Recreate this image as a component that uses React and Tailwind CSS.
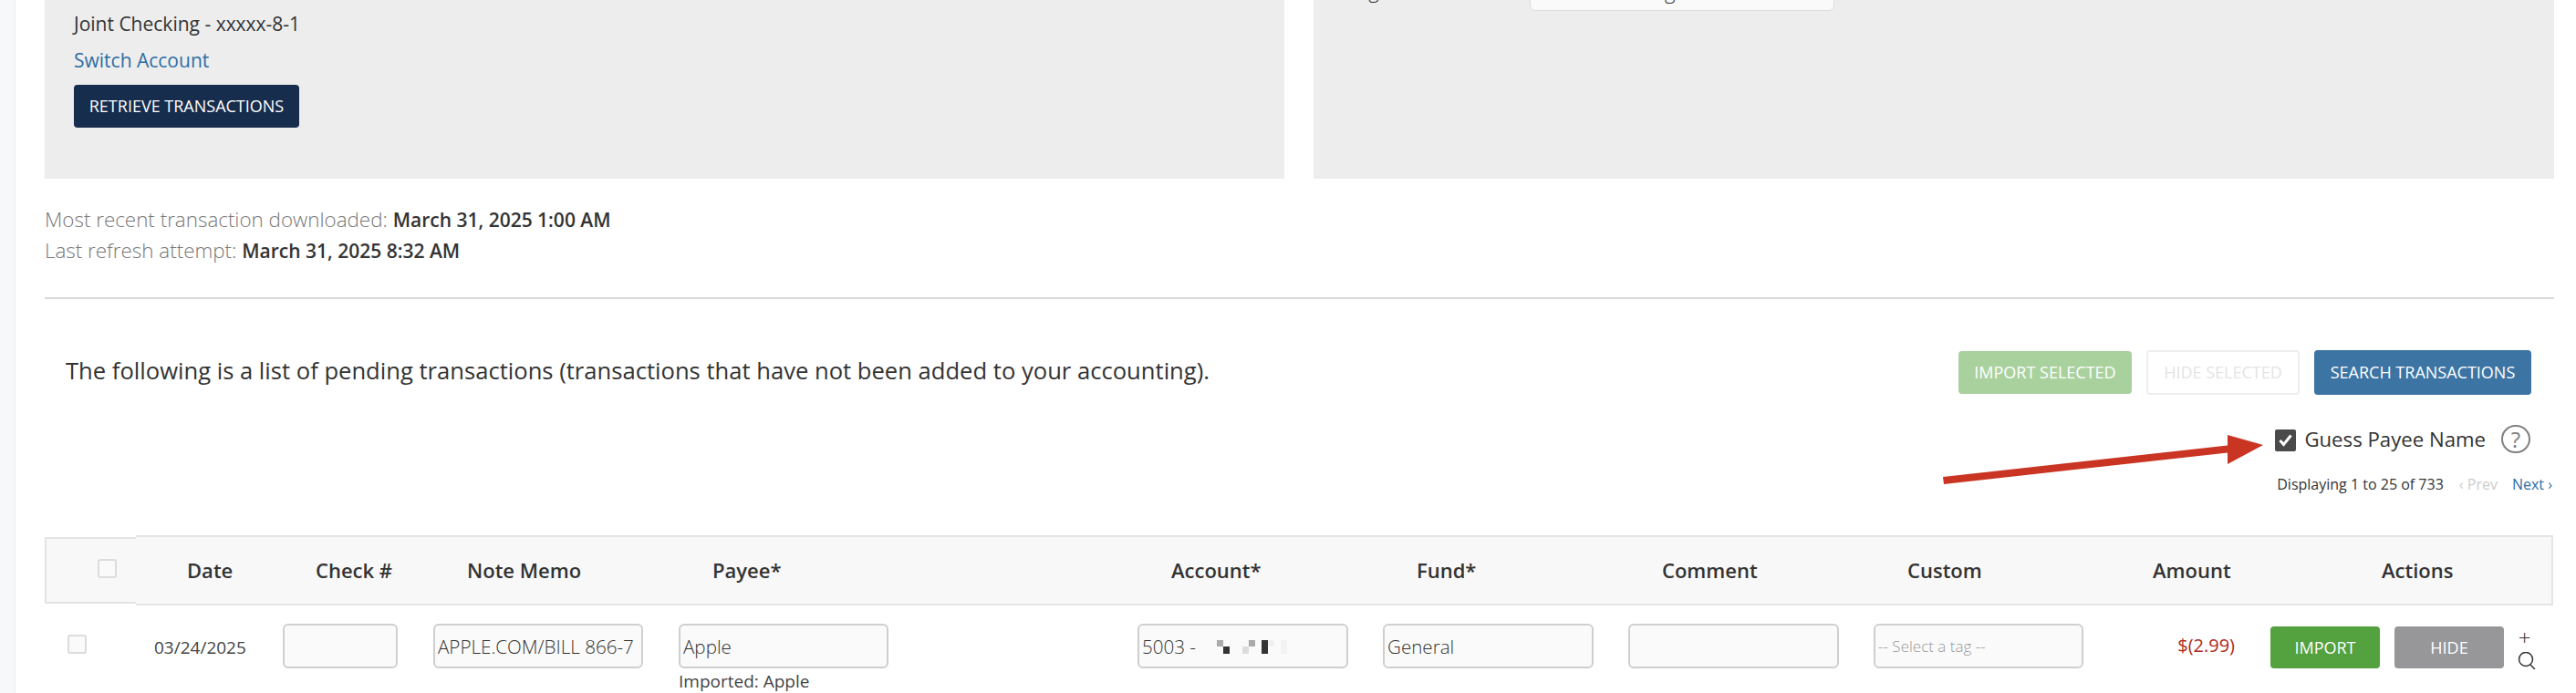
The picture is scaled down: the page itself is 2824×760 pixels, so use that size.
const gridCols = 'grid-cols-[161px_165px_269px_503px_269px_269px_269px_269px_167px_1fr]';
const rowCols = 'grid-cols-[120px_141px_165px_269px_503px_269px_269px_269px_269px_166px_1fr]';

function Field({ value = '', className = '' }) {
  return (
    <input
      readOnly
      value={value}
      className={`h-[49px] rounded-[6px] border-2 border-[#cfcfcf] bg-[#fafafa] px-[3px] text-[20.6px] font-light text-[#333] outline-none ${className}`}
    />
  );
}

function Box({ className = '' }) {
  return <div className={`h-[21px] w-[21px] rounded-[3px] border-2 border-[#dcdcdc] bg-[#fafafa] ${className}`} />;
}

function HeadCell({ children, className = 'pl-[37px]' }) {
  return <div className={`text-[22px] font-semibold text-[#333] whitespace-nowrap ${className}`}>{children}</div>;
}

export default function App() {
  return (
    <div className="relative flex h-[760px] w-[2824px] overflow-hidden bg-white font-['Open_Sans',sans-serif] text-[#333]">
      <div className="w-[17px] shrink-0 border-r border-[#eceef1] bg-[#f6f8fa]" />
      <div className="w-[2783px] pl-[32px]">
        <div className="flex h-[196px] gap-[32px]">
          <div className="flex w-[1359px] flex-col items-start bg-[#ededed] pl-[32px]">
            <div className="mt-[12px] text-[21px] leading-[28px]">Joint Checking - xxxxx-8-1</div>
            <a className="mt-[12px] text-[21px] leading-[28px] text-[#2e6da4]">Switch Account</a>
            <button className="mt-[13px] h-[47px] w-[247px] rounded-[4px] bg-[#172d4d] text-[18px] font-medium text-white">RETRIEVE TRANSACTIONS</button>
          </div>
          <div className="w-[1360px] bg-[#ededed]">
            <div className="flex items-start pl-[37px]">
              <div className="-mt-[25px] w-[200px] text-[22px] font-light leading-[28px] whitespace-nowrap">Tag Transactions</div>
              <div className="-mt-[28px] h-[40px] w-[334px] rounded-[6px] border border-[#dddddd] bg-[#fafafa] pl-[26px] pt-[3px] text-[22px] font-light leading-[28px]">-- Select a tag --</div>
            </div>
          </div>
        </div>

        <div className="mt-[28px] border-b-2 border-[#d8d8d8] pb-[34px] leading-[34px]">
          <div className="text-[22.4px] font-light text-[#777]">Most recent transaction downloaded: <span className="text-[21px] font-semibold text-[#333]">March 31, 2025 1:00 AM</span></div>
          <div className="text-[22.4px] font-light text-[#777]">Last refresh attempt: <span className="text-[21px] font-semibold text-[#333]">March 31, 2025 8:32 AM</span></div>
        </div>

        <div className="relative flex items-start justify-between pl-[23px] pr-[25px] pt-[56px]">
          <div className="mt-[6px] text-[25.6px] leading-[34px] text-[#333]">The following is a list of pending transactions (transactions that have not been added to your accounting).</div>
          <div className="flex gap-[16px]">
            <button className="mt-[1px] h-[47px] w-[190px] rounded-[4px] bg-[#a9d19e] text-[18px] font-medium text-white">IMPORT SELECTED</button>
            <button className="h-[49px] w-[168px] rounded-[4px] border-2 border-[#eeeeee] bg-white text-[18px] font-medium text-[#e4e4e4]">HIDE SELECTED</button>
            <button className="h-[49px] w-[238px] rounded-[4px] bg-[#3c74a4] text-[18px] font-medium text-white">SEARCH TRANSACTIONS</button>
          </div>
        </div>

        <div className="mt-[33px] flex items-center justify-end pr-[26px]">
          <div className="flex h-[24px] w-[23px] translate-y-[1px] items-center justify-center rounded-[2px] bg-[#4a4a4a]">
            <svg width="17" height="17" viewBox="0 0 17 17" fill="none" stroke="white" strokeWidth="3"><path d="M2.5 9l4 4.5 8-10" /></svg>
          </div>
          <span className="ml-[9px] text-[22.2px] leading-[30px]">Guess Payee Name</span>
          <span className="ml-[17px] flex h-[31px] w-[32px] items-center justify-center rounded-full border-2 border-[#808080] text-[24px] leading-none text-[#808080]">?</span>
        </div>
        <div className="mt-[22px] flex items-center justify-end pr-[2px] text-[16px] leading-[24px]">
          <span>Displaying 1 to 25 of 733</span>
          <span className="ml-[17px] text-[#ccc]">‹ Prev</span>
          <span className="ml-[16px] text-[#2e6da4]">Next ›</span>
        </div>

        <div className="mt-[44px] flex items-center">
          <div className="flex h-[73px] w-[100px] shrink-0 items-center justify-center border-y-2 border-l-2 border-[#e4e4e4] bg-[#f8f8f8]">
            <Box className="translate-x-[17px] -translate-y-[2px]" />
          </div>
          <div className={`grid h-[77px] w-[2650px] items-center border-y-2 border-r-2 border-[#e4e4e4] bg-[#f8f8f8] ${gridCols}`}>
            <HeadCell className="pl-[56px]">Date</HeadCell>
            <HeadCell className="pl-[36px]">Check #</HeadCell>
            <HeadCell>Note Memo</HeadCell>
            <HeadCell>Payee*</HeadCell>
            <HeadCell>Account*</HeadCell>
            <HeadCell>Fund*</HeadCell>
            <HeadCell>Comment</HeadCell>
            <HeadCell>Custom</HeadCell>
            <HeadCell>Amount</HeadCell>
            <HeadCell className="pl-[121px]">Actions</HeadCell>
          </div>
        </div>

        <div className={`mt-[20px] grid items-start ${rowCols}`}>
          <Box className="ml-[25px] mt-[12px]" />
          <div className="mt-[12px] text-[19px] leading-[28px] text-[#444]">03/24/2025</div>
          <Field className="w-[126px]" />
          <Field className="w-[230px]" value="APPLE.COM/BILL 866-7" />
          <div>
            <Field className="w-[230px]" value="Apple" />
            <div className="mt-[1px] text-[19px] leading-[26px] text-[#444]">Imported: Apple</div>
          </div>
          <div className="relative">
            <Field className="w-[231px]" value="5003 -" />
            <svg className="absolute left-[87px] top-[18px]" width="77" height="15">
              <rect x="0" y="0" width="7" height="7" fill="#aaa" />
              <rect x="7" y="7" width="7" height="8" fill="#333" />
              <rect x="28" y="7" width="7" height="8" fill="#ddd" />
              <rect x="35" y="0" width="7" height="7" fill="#aaa" />
              <rect x="49" y="0" width="7" height="15" fill="#333" />
              <rect x="56" y="0" width="7" height="7" fill="#f0f0f0" />
              <rect x="70" y="0" width="7" height="15" fill="#f3f3f3" />
            </svg>
          </div>
          <Field className="w-[231px]" value="General" />
          <Field className="w-[231px]" />
          <Field className="w-[230px] !text-[17px] !text-[#999]" value="-- Select a tag --" />
          <div className="mt-[10px] pr-[39px] text-right text-[20px] leading-[28px] text-[#b02a20]">$(2.99)</div>
          <div className="flex items-start">
            <button className="mt-[3px] h-[46px] w-[120px] rounded-[4px] bg-[#53a13f] text-[18px] font-medium text-white">IMPORT</button>
            <button className="ml-[16px] mt-[3px] h-[46px] w-[120px] rounded-[4px] bg-[#97979a] text-[18px] font-medium text-white">HIDE</button>
            <div className="ml-[15px] flex flex-col items-center">
              <span className="-ml-[6px] mt-[5px] text-[24px] leading-[20px] font-light">+</span>
              <svg className="mt-[6px]" width="21" height="19" viewBox="0 0 21 19" fill="none" stroke="#333" strokeWidth="1.5"><circle cx="9" cy="8" r="7.5" /><path d="M14 14l5 5" /></svg>
            </div>
          </div>
        </div>
      </div>

      {/* annotation arrow */}
      <svg className="absolute left-[2125px] top-[470px]" width="360" height="65" viewBox="0 0 360 65">
        <path d="M5 53L317 18.5L317 7L356 18L317 39L317 26.5L6 61z" fill="#c93522" />
      </svg>
    </div>
  );
}
